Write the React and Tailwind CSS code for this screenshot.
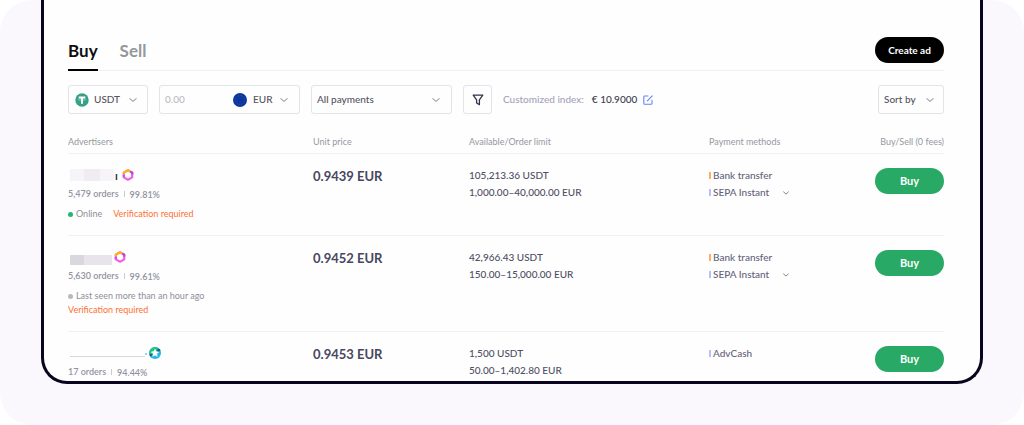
import { useState } from 'react'
import clsx from 'clsx'

const OFFERS = [
  {
    id: 1,
    badge: 'hex',
    orders: '5,479 orders',
    rate: '99.81%',
    status: 'Online',
    online: true,
    verification: 'inline',
    price: '0.9439 EUR',
    available: '105,213.36 USDT',
    limit: '1,000.00–40,000.00 EUR',
    methods: ['Bank transfer', 'SEPA Instant'],
  },
  {
    id: 2,
    badge: 'hex',
    orders: '5,630 orders',
    rate: '99.61%',
    status: 'Last seen more than an hour ago',
    online: false,
    verification: 'below',
    price: '0.9452 EUR',
    available: '42,966.43 USDT',
    limit: '150.00–15,000.00 EUR',
    methods: ['Bank transfer', 'SEPA Instant'],
  },
  {
    id: 3,
    badge: 'star',
    orders: '17 orders',
    rate: '94.44%',
    price: '0.9453 EUR',
    available: '1,500 USDT',
    limit: '50.00–1,402.80 EUR',
    methods: ['AdvCash'],
  },
]

const METHOD_COLORS = {
  'Bank transfer': 'bg-[#ffad66]',
  'SEPA Instant': 'bg-[#b9bdfb]',
  AdvCash: 'bg-[#b9bdfb]',
}

function Chevron({ className }) {
  return (
    <svg viewBox="0 0 10 6" className={className} fill="none" stroke="currentColor" strokeWidth="1.3" strokeLinecap="round" strokeLinejoin="round" aria-hidden="true">
      <path d="M1 1.2 5 4.8 9 1.2" />
    </svg>
  )
}

function TetherIcon() {
  return (
    <svg viewBox="0 0 14 14" className="size-3.5 shrink-0" aria-hidden="true">
      <circle cx="7" cy="7" r="6.7" fill="#36a186" />
      <path d="M3.7 3.6h6.6v1.9H8v5.2H6V5.5H3.7z" fill="#fff" />
      <ellipse cx="7" cy="6.6" rx="3.7" ry="0.8" fill="none" stroke="#d5efe7" strokeWidth="0.4" />
    </svg>
  )
}

function EuroFlag() {
  return (
    <svg viewBox="0 0 14 14" className="size-3.5 shrink-0" aria-hidden="true">
      <circle cx="7" cy="7" r="7" fill="#0b379e" />
      <circle cx="7" cy="7" r="4.4" fill="none" stroke="#5f6f78" strokeWidth="0.7" strokeDasharray="0.7 1.6" />
    </svg>
  )
}

function FilterIcon() {
  return (
    <svg viewBox="0 0 12 12" className="size-3" fill="none" stroke="#33334d" strokeWidth="1.3" strokeLinejoin="round" aria-hidden="true">
      <path d="M1.2 1.2h9.6L7.4 5.8v4.9L4.6 9V5.8z" />
    </svg>
  )
}

function EditIcon() {
  return (
    <svg viewBox="0 0 10 10" className="size-2.5" fill="none" stroke="#6685f5" strokeWidth="1.1" strokeLinecap="round" strokeLinejoin="round" aria-hidden="true">
      <path d="M5 1H1.6Q.8 1 .8 1.8v6.6q0 .8.8.8h6.6q.8 0 .8-.8V5.2" />
      <path d="M4.4 5.8 9.2.8" />
    </svg>
  )
}

function HexBadge() {
  return (
    <svg viewBox="0 0 12 12" className="size-3" fill="none" strokeWidth="2.2" strokeLinejoin="round" aria-hidden="true">
      <path d="M6 1.3 10.2 3.6v4.8L6 10.7 1.8 8.4V3.6z" fill="#fff" stroke="#f25fe6" />
      <path d="M1.8 5V3.6L6 1.3l2 1.1" stroke="#fcb316" />
      <path d="M8.4 2.6l1.8 1v1.8" stroke="#b04ac4" />
      <path d="M1.8 6.2v1.6" stroke="#c04fd0" />
    </svg>
  )
}

function StarBadge() {
  return (
    <svg viewBox="0 0 12 12" className="size-3" aria-hidden="true">
      <circle cx="6" cy="6" r="6" fill="#22b8e4" />
      <path d="M.3 7.6A6 6 0 0 1 9.6 1.2L6 6z" fill="#20c586" />
      <path d="M9.6 1.2A6 6 0 0 1 11.5 3.7L6 6z" fill="#155f8a" />
      <path d="M.3 7.6A6 6 0 0 0 1.3 9.7L6 6z" fill="#155f8a" />
      <path d="m6 2.3 1.1 2.3 2.5.4-1.8 1.8.4 2.5L6 8.1 3.8 9.3l.4-2.5L2.4 5l2.5-.4z" fill="#fff" stroke="#fff" strokeWidth="0.6" strokeLinejoin="round" />
    </svg>
  )
}

// Advertiser names are redacted, only a masked strip is left of each
function MaskedName({ id }) {
  if (id === 1) {
    return (
      <span className="flex items-end gap-px">
        <span className="flex h-3 w-11 bg-[#f6f4f8]">
          <span className="ml-3.5 w-4 bg-[#efedf2]" />
        </span>
        <span className="text-[11px] leading-[10px] font-bold text-[#2e2e45]">ı</span>
      </span>
    )
  }
  if (id === 2) {
    return (
      <span className="flex h-2.5 w-10.5 self-end bg-[#e7e5eb]">
        <span className="w-3.5 bg-[#dad8de]" />
      </span>
    )
  }
  return (
    <span className="flex items-end self-end">
      <span className="mb-1 h-px w-[75px] bg-[#dcd5dd]" />
      <span className="mb-1.5 size-0.5 bg-[#a9c8ee]" />
    </span>
  )
}

function Advertiser({ offer }) {
  return (
    <div className="text-[9px] leading-3 text-[#8f8f99]">
      <div className={clsx('flex h-4 items-center pl-0.5', offer.id === 1 ? 'gap-1' : 'gap-0.5')}>
        <MaskedName id={offer.id} />
        {offer.badge === 'hex' ? <HexBadge /> : <StarBadge />}
      </div>
      <div className="mt-1 flex items-center gap-[5px] font-semibold text-[#9393a0]">
        <span>{offer.orders}</span>
        <span className="h-1.5 w-px bg-[#c9c9d2]" />
        <span className="pt-0.5">{offer.rate}</span>
      </div>
      {offer.status && (
        <div className="mt-[7px] flex items-center gap-[11px]">
          <span className="flex items-center gap-[3px]">
            <span className={clsx('size-[5px] rounded-full', offer.online ? 'bg-[#27b46b]' : 'bg-[#b9b9be]')} />
            {offer.status}
          </span>
          {offer.verification === 'inline' && <span className="text-[#ff7033]">Verification required</span>}
        </div>
      )}
      {offer.verification === 'below' && <div className="mt-0.5 text-[#ff7033]">Verification required</div>}
    </div>
  )
}

function OfferRow({ offer }) {
  return (
    <tr className="border-b border-[#f1f0f4] align-top last:border-b-0">
      <td className="pt-[13px] pb-[15px]">
        <Advertiser offer={offer} />
      </td>
      <td className="pt-3.5 text-[13px] leading-4 font-bold text-[#474760]">{offer.price}</td>
      <td className="pt-[13px] text-[10px] leading-[17px] font-medium text-[#4f4f63]">
        <div>{offer.available}</div>
        <div>{offer.limit}</div>
      </td>
      <td className="pt-[13px] text-[10px] leading-[17px] font-medium text-[#63637a]">
        {offer.methods.map((method, i) => (
          <div key={method} className="flex items-center gap-0.5">
            <span className={clsx('h-[7px] w-0.5', METHOD_COLORS[method])} />
            {method}
            {i > 0 && (
              <button type="button" aria-label="Show all payment methods" className="ml-3 text-[#62626f]">
                <Chevron className="h-1 w-1.5" />
              </button>
            )}
          </div>
        ))}
      </td>
      <td className="pt-[13px] text-right">
        <button type="button" className="h-[26px] w-[69px] rounded-full bg-[#28aa66] text-[11px] font-bold text-white">
          Buy
        </button>
      </td>
    </tr>
  )
}

function Tab({ active, onClick, children }) {
  return (
    <button
      type="button"
      onClick={onClick}
      className={clsx(
        'border-b-2 pb-2 text-[17px] leading-5 font-bold',
        active ? 'border-black text-[#0c0c12]' : 'border-transparent text-[#96969d]',
      )}
    >
      {children}
    </button>
  )
}

const box = 'flex h-[29px] items-center rounded-[3px] border border-[#e3e3e8] text-[#55555f]'
const select = 'min-w-0 appearance-none bg-transparent outline-none'

export default function App() {
  const [tab, setTab] = useState('Buy')
  const [amount, setAmount] = useState('')

  return (
    <div className="rounded-[32px] bg-[#faf8fc] px-[41px] pb-[41px] font-['Lato','Noto_Sans',sans-serif]">
      <main className="overflow-hidden rounded-b-[26px] border-x-[3px] border-b-[3px] border-[#09041f] bg-[#fefefe] pt-9 pr-9 pl-6">
        <header className="flex items-end justify-between border-b border-[#efeef3]">
          <nav className="-mb-px flex gap-[22px]">
            {['Buy', 'Sell'].map(name => (
              <Tab key={name} active={tab === name} onClick={() => setTab(name)}>{name}</Tab>
            ))}
          </nav>
          <button type="button" className="mt-px mb-[7px] h-[26px] w-[69px] rounded-full bg-black text-[10px] font-bold text-white">
            Create ad
          </button>
        </header>

        <div className="mt-3.5 flex items-center text-[10px] font-medium">
          <label className={`${box} w-20 gap-[5px] px-1.5`}>
            <TetherIcon />
            <select aria-label="Coin" className={`${select} flex-1`}>
              <option>USDT</option>
            </select>
            <Chevron className="mr-1 h-1.5 w-2 text-[#a0a0aa]" />
          </label>

          <div className={`${box} ml-[11px] w-[141px] px-[5px]`}>
            <input
              aria-label="Amount"
              placeholder="0.00"
              value={amount}
              onChange={e => setAmount(e.target.value)}
              className="min-w-0 flex-1 outline-none placeholder:text-[#bcbcc4]"
            />
            <label className="flex items-center gap-1.5">
              <EuroFlag />
              <select aria-label="Currency" className={`${select} w-[21px]`}>
                <option>EUR</option>
              </select>
              <Chevron className="mr-1.5 h-1.5 w-2 text-[#a0a0aa]" />
            </label>
          </div>

          <label className={`${box} ml-[11px] w-[141px] px-[5px]`}>
            <select aria-label="Payment method" className={`${select} flex-1`}>
              <option>All payments</option>
            </select>
            <Chevron className="mr-1.5 h-1.5 w-2 text-[#a0a0aa]" />
          </label>

          <button type="button" aria-label="Filter" className={`${box} ml-[11px] w-[29px] justify-center`}>
            <FilterIcon />
          </button>

          <div className="ml-[11px] flex items-center text-[#a3a3b8]">
            Customized index:
            <span className="ml-2 text-[#3d3d50]">€ 10.9000</span>
            <button type="button" aria-label="Edit index" className="ml-1.5">
              <EditIcon />
            </button>
          </div>

          <label className={`${box} ml-auto w-[66px] px-[5px]`}>
            <select aria-label="Sort by" className={`${select} flex-1`}>
              <option>Sort by</option>
            </select>
            <Chevron className="mr-1 h-1.5 w-2 text-[#a0a0aa]" />
          </label>
        </div>

        {/* the frame cuts the list off below the third offer */}
        <div className="mt-5 h-[247px] overflow-hidden">
          <table className="w-full table-fixed text-left">
            <thead>
              <tr className="border-b border-[#f1f0f4] text-[9px] leading-4 text-[#97979f]">
                <th className="w-[245px] pb-[3px] font-normal">Advertisers</th>
                <th className="w-[156px] pb-[3px] font-normal">Unit price</th>
                <th className="w-[240px] pb-[3px] font-normal">Available/Order limit</th>
                <th className="pb-[3px] font-normal">Payment methods</th>
                <th className="pb-[3px] text-right font-normal">Buy/Sell (0 fees)</th>
              </tr>
            </thead>
            <tbody>
              {OFFERS.map(offer => <OfferRow key={offer.id} offer={offer} />)}
            </tbody>
          </table>
        </div>
      </main>
    </div>
  )
}
